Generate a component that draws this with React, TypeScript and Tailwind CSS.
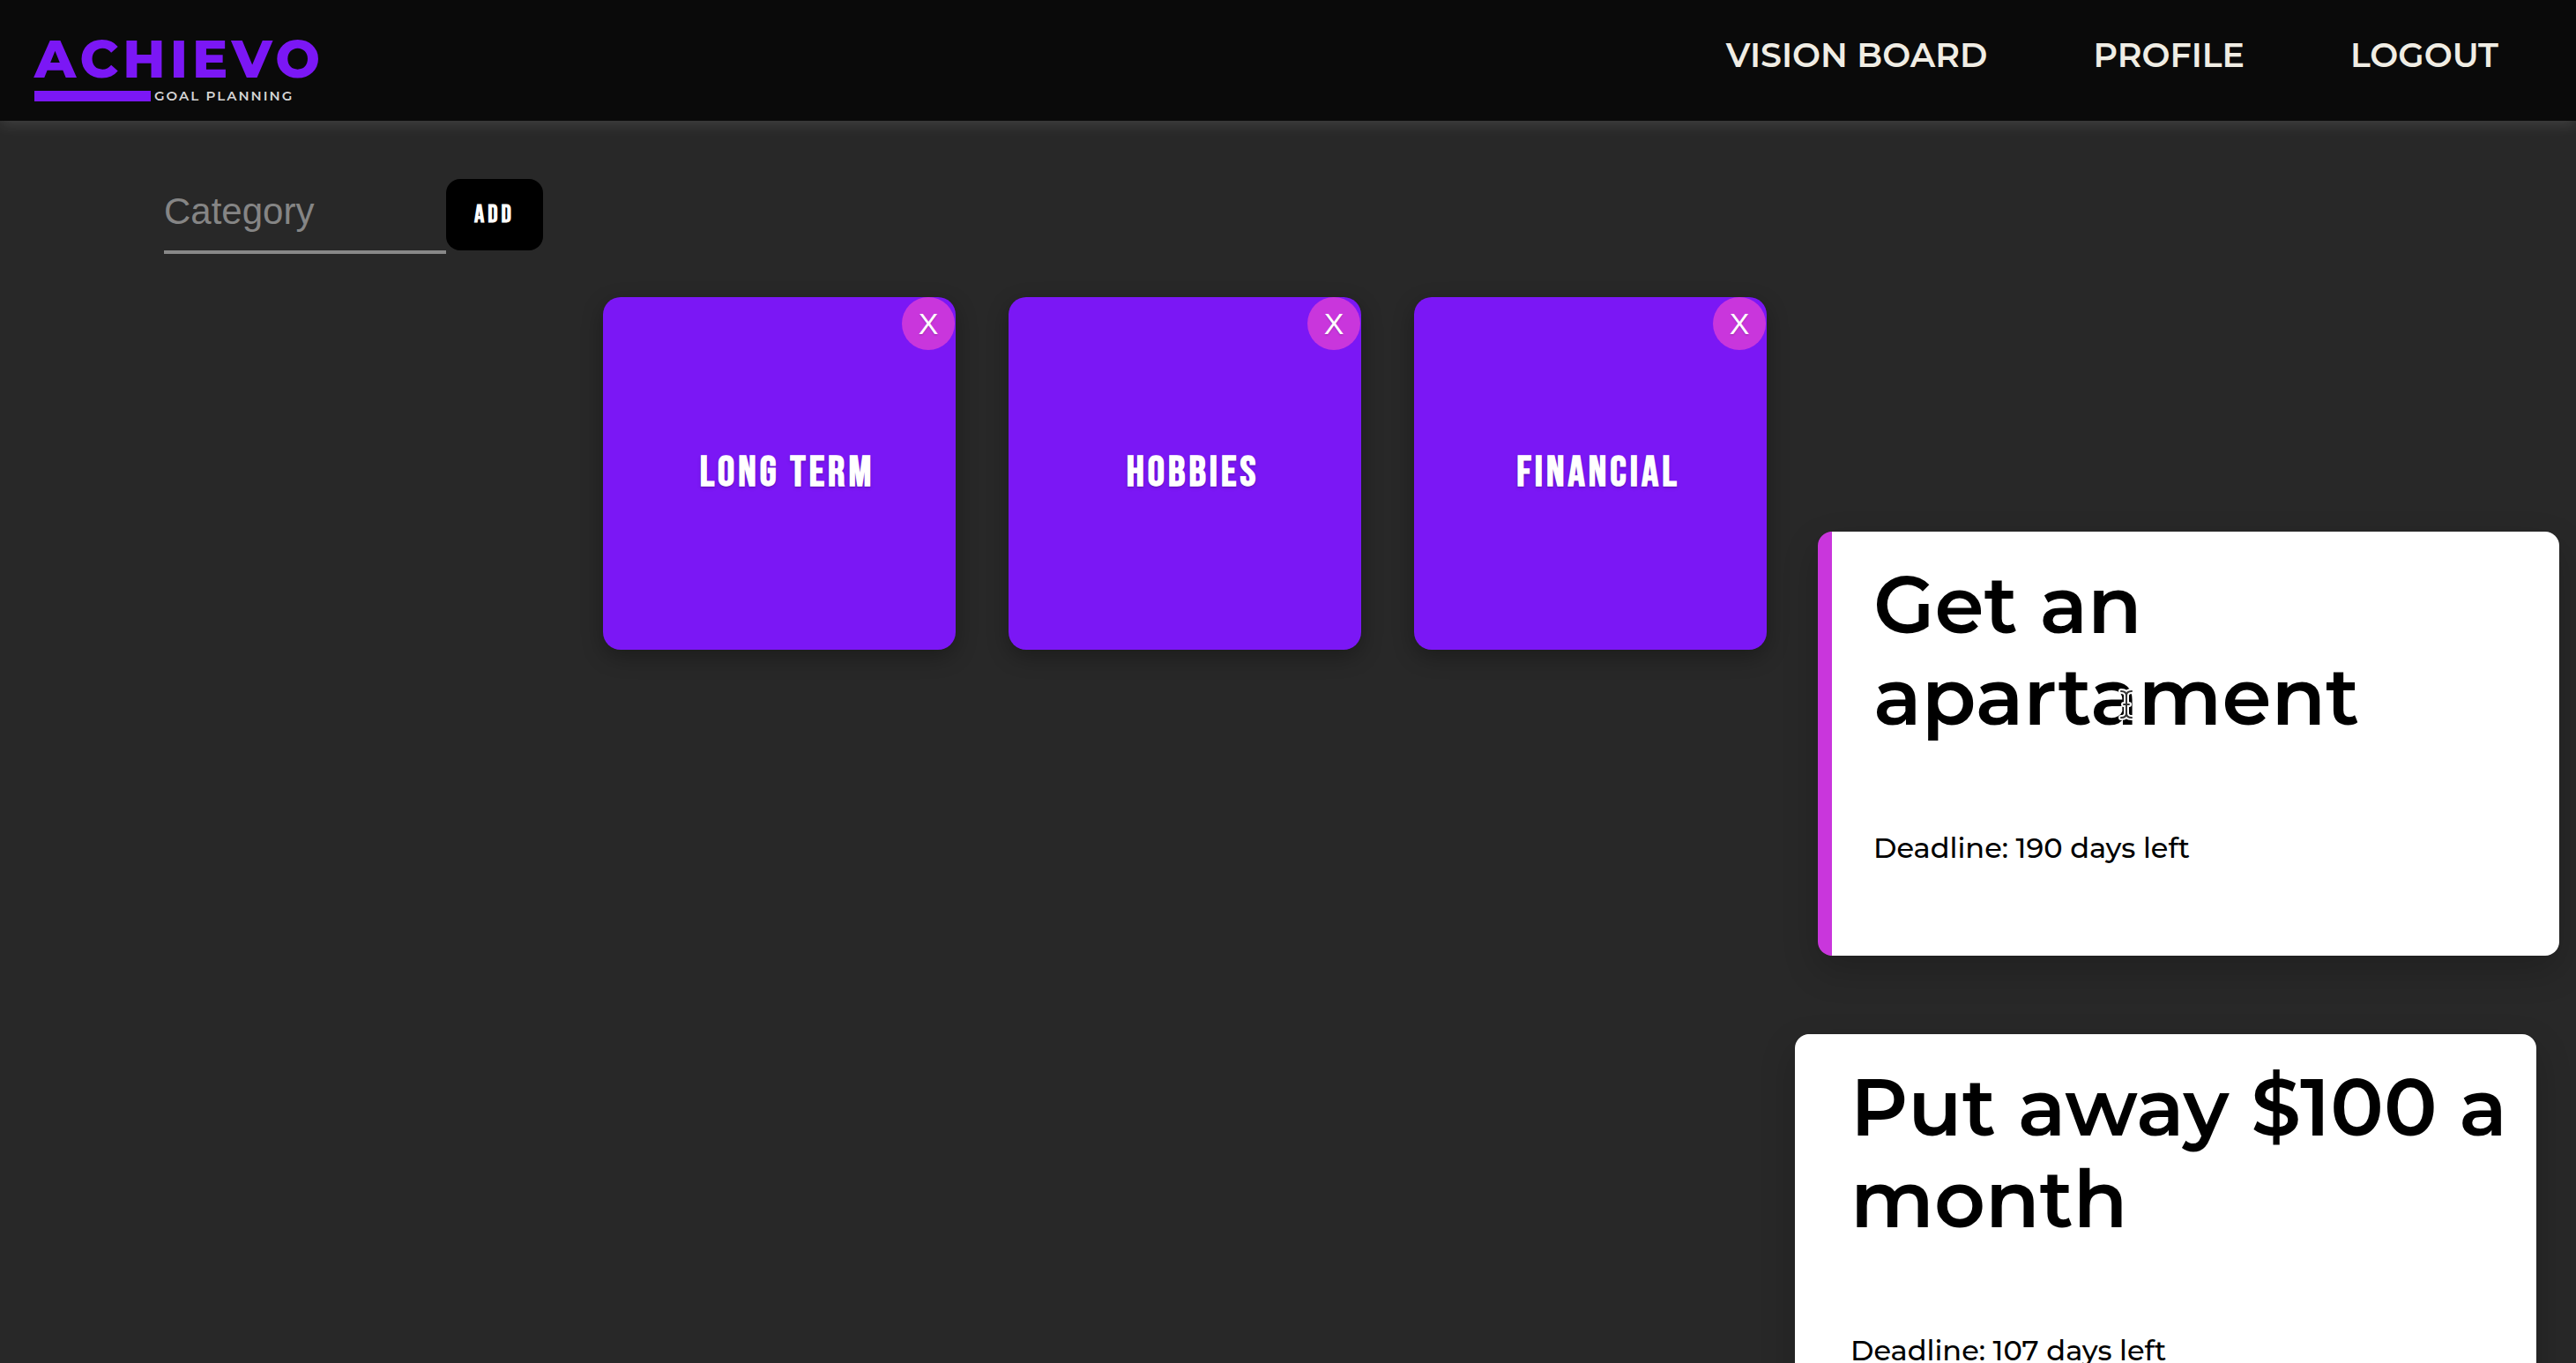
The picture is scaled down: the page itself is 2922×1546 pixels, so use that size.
import React from "react";

type Goal = { title: string; daysLeft: number; active?: boolean };

const links = ["VISION BOARD", "PROFILE", "LOGOUT"];
const categories = ["LONG TERM", "HOBBIES", "FINANCIAL"];
const goals: Goal[] = [
  { title: "Get an apartament", daysLeft: 190, active: true },
  { title: "Put away $100 a month", daysLeft: 107 },
];

function Logo() {
  return (
    <a href="#home" aria-label="Achievo goal planning" className="flex flex-col gap-1">
      <span className="text-[60px] leading-[60px] font-extrabold tracking-[5px] text-[#7b17f5]">ACHIEVO</span>
      <span className="flex items-center gap-1">
        <span className="h-3 w-[132px] bg-[#7b17f5]" />
        <span className="text-[15px] leading-4 font-semibold tracking-[2px] text-[#d4d4d4]">GOAL PLANNING</span>
      </span>
    </a>
  );
}

function Header() {
  return (
    <header className="relative flex h-[137px] items-start justify-between bg-[#0a0a0a] pt-[37px] pr-[88px] pl-[39px] shadow-[0_4px_16px_rgba(255,255,255,0.12)]">
      <Logo />
      <nav className="flex gap-[120px] text-[38px] leading-[52px] font-semibold text-[#f0ede4]">
        {links.map((link) => (
          <a key={link} href="#nav">
            {link}
          </a>
        ))}
      </nav>
    </header>
  );
}

function CategoryForm() {
  return (
    <form className="flex items-start pt-[66px] pl-[186px]" onSubmit={(e) => e.preventDefault()}>
      <input
        aria-label="Category"
        placeholder="Category"
        className="h-[85px] w-80 border-b-4 border-[#888888] bg-transparent pb-2 font-['Liberation_Sans',sans-serif] text-[42px] text-white outline-none placeholder:text-[#858585]"
      />
      <button
        type="submit"
        className="h-[81px] w-[110px] rounded-2xl bg-black font-['Bebas_Neue','Liberation_Sans',sans-serif] text-[28px] font-bold tracking-[4px] text-white"
      >
        ADD
      </button>
    </form>
  );
}

function CategoryCard({ name }: { name: string }) {
  return (
    <article className="relative flex aspect-square items-center justify-center rounded-[20px] bg-[#7b17f5] shadow-[0_8px_24px_rgba(0,0,0,0.3)]">
      <h2 className="pl-[18px] font-['Bebas_Neue','Liberation_Sans',sans-serif] text-5xl font-bold tracking-[4px] text-white text-shadow-md">
        {name}
      </h2>
      <button
        type="button"
        aria-label={`Remove ${name}`}
        className="absolute top-0 right-px size-[60px] rounded-full bg-[#c936dc] font-['Liberation_Sans',sans-serif] text-[34px] text-white text-shadow-sm"
      >
        X
      </button>
    </article>
  );
}

function TextCursor() {
  const beam = "M3 3Q9 3 9 8V28Q9 33 3 33M15 3Q9 3 9 8M9 28Q9 33 15 33M6 18H12";
  return (
    <svg
      aria-hidden="true"
      viewBox="0 0 18 36"
      className="absolute top-[147px] left-[278px] h-9 w-[18px]"
      fill="none"
      strokeLinecap="round"
    >
      <path d={beam} stroke="#ffffff" strokeWidth="6" />
      <path d={beam} stroke="#333333" strokeWidth="2" />
    </svg>
  );
}

function GoalCard({ goal }: { goal: Goal }) {
  return (
    <article
      className={
        "rounded-2xl border-l-16 bg-white pt-[31px] pr-5 pb-[102px] pl-[47px] text-black shadow-[0_16px_40px_rgba(0,0,0,0.2)] " +
        (goal.active ? "translate-x-[26px] border-[#c936dc]" : "border-white")
      }
    >
      <h3 className="relative text-[90px] leading-[104px] font-semibold">
        {goal.title}
        {goal.active && <TextCursor />}
      </h3>
      <p className="mt-[100px] text-[32px] leading-10 font-medium">Deadline: {goal.daysLeft} days left</p>
    </article>
  );
}

export default function App() {
  return (
    <div className="h-screen overflow-hidden bg-[#282828] font-[Montserrat,Inter,sans-serif]">
      <Header />
      <main>
        <CategoryForm />
        <div className="flex items-start gap-8 pt-[49px] pr-[45px] pl-[684px]">
          <section aria-label="Categories" className="grid flex-1 grid-cols-3 gap-[60px]">
            {categories.map((name) => (
              <CategoryCard key={name} name={name} />
            ))}
          </section>
          <section aria-label="Goals" className="mt-[266px] flex w-[841px] flex-col gap-[89px]">
            {goals.map((goal) => (
              <GoalCard key={goal.title} goal={goal} />
            ))}
          </section>
        </div>
      </main>
    </div>
  );
}
